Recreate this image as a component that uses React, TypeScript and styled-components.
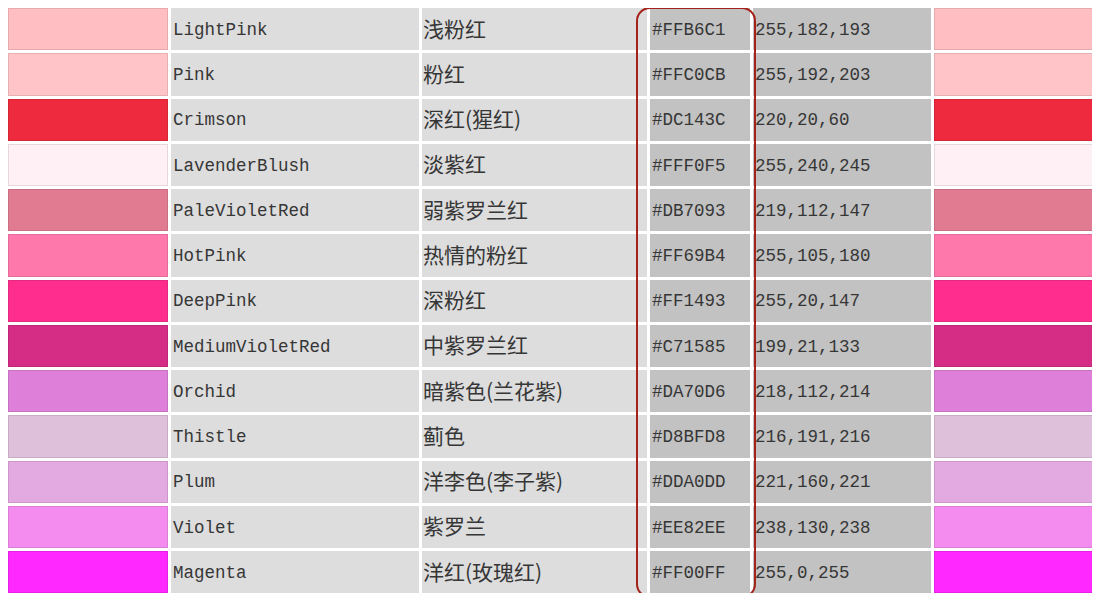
import styled, { createGlobalStyle } from "styled-components";

const GlobalStyle = createGlobalStyle`
   body {
      margin: 8px;
      background: #ffffff;
   }
`;

type ColorRow = {
   swatch: string;
   name: string;
   cn: string;
   hex: string;
   rgb: string;
};

const rows: ColorRow[] = [
   { swatch: "#FFBEC2", name: "LightPink", cn: "浅粉红", hex: "#FFB6C1", rgb: "255,182,193" },
   { swatch: "#FFC4C8", name: "Pink", cn: "粉红", hex: "#FFC0CB", rgb: "255,192,203" },
   { swatch: "#EE2A3E", name: "Crimson", cn: "深红(猩红)", hex: "#DC143C", rgb: "220,20,60" },
   { swatch: "#FFF0F5", name: "LavenderBlush", cn: "淡紫红", hex: "#FFF0F5", rgb: "255,240,245" },
   { swatch: "#E07B92", name: "PaleVioletRed", cn: "弱紫罗兰红", hex: "#DB7093", rgb: "219,112,147" },
   { swatch: "#FF78AC", name: "HotPink", cn: "热情的粉红", hex: "#FF69B4", rgb: "255,105,180" },
   { swatch: "#FF2E8E", name: "DeepPink", cn: "深粉红", hex: "#FF1493", rgb: "255,20,147" },
   { swatch: "#D52D86", name: "MediumVioletRed", cn: "中紫罗兰红", hex: "#C71585", rgb: "199,21,133" },
   { swatch: "#DE80DA", name: "Orchid", cn: "暗紫色(兰花紫)", hex: "#DA70D6", rgb: "218,112,214" },
   { swatch: "#DEC0DA", name: "Thistle", cn: "蓟色", hex: "#D8BFD8", rgb: "216,191,216" },
   { swatch: "#E2AAE0", name: "Plum", cn: "洋李色(李子紫)", hex: "#DDA0DD", rgb: "221,160,221" },
   { swatch: "#F38CEE", name: "Violet", cn: "紫罗兰", hex: "#EE82EE", rgb: "238,130,238" },
   { swatch: "#FF28FF", name: "Magenta", cn: "洋红(玫瑰红)", hex: "#FF00FF", rgb: "255,0,255" },
];

const TableWrap = styled.div`
   position: relative;
   width: 1086px;
`;

const Grid = styled.div`
   display: grid;
   grid-template-columns: 160px 248px 225px 100px 178px 160px;
   grid-auto-rows: 42.25px;
   column-gap: 3px;
   row-gap: 3px;
`;

const Row = styled.div`
   display: contents;
`;

const Swatch = styled.div<{ $color: string }>`
   background: ${(p) => p.$color};
   box-shadow: inset 0 0 0 1px rgba(0, 0, 0, 0.1);
`;

const Cell = styled.div<{ $dark?: boolean }>`
   display: flex;
   align-items: center;
   box-sizing: border-box;
   padding: 3px 0 0 2px;
   background: ${(p) => (p.$dark ? "#c2c2c2" : "#dddddd")};
   color: #363636;
   font-family: "Liberation Mono", "DejaVu Sans Mono", monospace;
   font-size: 17.5px;
   line-height: 1;
   white-space: nowrap;
   overflow: hidden;
`;

const CnCell = styled(Cell)`
   font-family: "Noto Sans CJK SC", "Liberation Sans", sans-serif;
   font-size: 21px;
   padding: 0 0 2px 1px;
`;

const Highlight = styled.div`
   position: absolute;
   left: 628px;
   top: -1px;
   width: 120px;
   height: 591px;
   box-sizing: border-box;
   border: 2px solid #a3231c;
   border-radius: 14px;
   pointer-events: none;
`;

const App: React.FC = () => {
   return (
      <>
         <GlobalStyle />
         <TableWrap>
            <Grid>
               {rows.map((r) => (
                  <Row key={r.name}>
                     <Swatch $color={r.swatch} />
                     <Cell>{r.name}</Cell>
                     <CnCell>{r.cn}</CnCell>
                     <Cell $dark>{r.hex}</Cell>
                     <Cell $dark>{r.rgb}</Cell>
                     <Swatch $color={r.swatch} />
                  </Row>
               ))}
            </Grid>
            <Highlight />
         </TableWrap>
      </>
   );
};

export default App;
